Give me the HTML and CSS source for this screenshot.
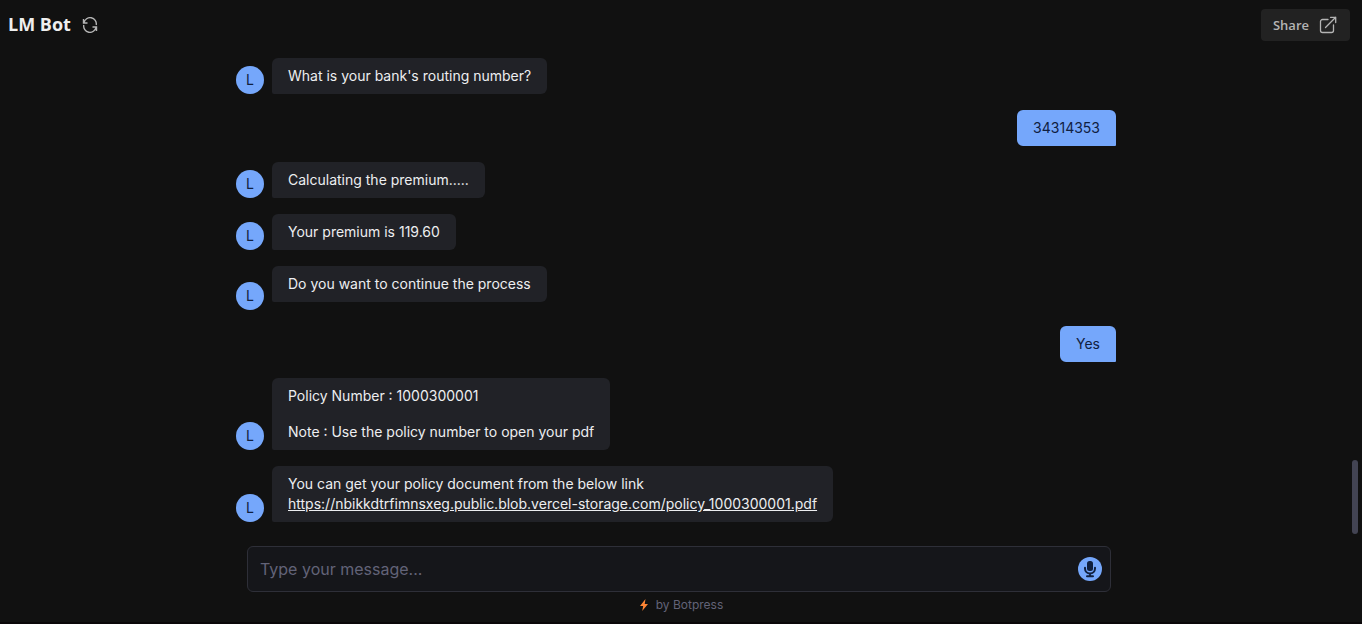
FILE: index.html
```html
<!DOCTYPE html>
<html lang="en">
<head>
<meta charset="utf-8">
<title>LM Bot</title>
<link rel="stylesheet" href="styles.css">
</head>
<body>
<header class="topbar">
  <h1 class="title">LM Bot</h1>
  <button class="restart" type="button" aria-label="Restart conversation">
    <svg viewBox="0 0 16 16" width="16" height="16" fill="none" stroke="currentColor" stroke-width="1.400"><path d="M1.500 2v4h4M2 5.700A6.200 6.200 0 0 1 14.200 8M14.500 14v-4h-4M14 10.300A6.200 6.200 0 0 1 1.800 8"/></svg>
  </button>
  <button class="share" type="button">Share
    <svg viewBox="0 0 18 18" width="18" height="18" fill="none" stroke="currentColor" stroke-width="1.300" stroke-linecap="round" stroke-linejoin="round"><path d="M9 3.500H3.500a2 2 0 0 0-2 2v9a2 2 0 0 0 2 2h9a2 2 0 0 0 2-2V9M6.500 11.500 16.700 1.300M11.500 1.300h5.200v5.200"/></svg>
  </button>
</header>
<main class="chat">
  <div class="messages">
    <div class="row"><span class="avatar">L</span><p class="bubble">What is your bank's routing number?</p></div>
    <div class="row user"><p class="bubble">34314353</p></div>
    <div class="row"><span class="avatar">L</span><p class="bubble">Calculating the premium.....</p></div>
    <div class="row"><span class="avatar">L</span><p class="bubble">Your premium is 119.60</p></div>
    <div class="row choice"><span class="avatar">L</span><p class="bubble">Do you want to continue the process</p></div>
    <div class="row user"><p class="bubble">Yes</p></div>
    <div class="row"><span class="avatar">L</span><div class="bubble paragraphs"><p>Policy Number : 1000300001</p><p>Note : Use the policy number to open your pdf</p></div></div>
    <div class="row"><span class="avatar">L</span><p class="bubble">You can get your policy document from the below link<br><a href="#">https://nbikkdtrfimnsxeg.public.blob.vercel-storage.com/policy_1000300001.pdf</a></p></div>
  </div>
  <span class="thumb"></span>
</main>
<div class="dock">
  <form class="composer">
    <input class="field" type="text" placeholder="Type your message..." aria-label="Message">
    <button class="mic" type="button" aria-label="Record voice">
      <svg viewBox="0 0 24 24" width="24" height="24" fill="none" stroke="currentColor" stroke-width="2" stroke-linecap="round"><rect x="9" y="4" width="6" height="10" rx="2.500" fill="currentColor" stroke="none"/><path d="M7 10.800v.7a5 5 0 0 0 10 0v-.7M12 16.800v2.400M9 19.300h6"/></svg>
    </button>
  </form>
</div>
<footer class="credit">
  <svg viewBox="0 0 10 14" width="10" height="14" fill="#ff8534"><path d="M6.500 1 1 8H4.200L3.200 13 9 6H5.700z"/></svg>
  <span>by Botpress</span>
</footer>
</body>
</html>
```
FILE: styles.css
```css
* { box-sizing: border-box; }
body {
  margin: 0;
  min-height: 100vh;
  display: flex;
  flex-direction: column;
  background: #111111;
  color: #edeef0;
  font-family: Inter, "Liberation Sans", sans-serif;
  font-size: 14px;
  line-height: 20px;
  border-bottom: 2px solid #0a0709;
}
p { margin: 0; }
button { border: 0; padding: 0; font: inherit; cursor: pointer; }
svg { display: block; }
.topbar {
  display: flex;
  align-items: center;
  height: 50px;
  padding: 0 12px 0 8px;
  font-family: "Open Sans", "Noto Sans", sans-serif;
}
.title { margin: 0; padding-bottom: 2px; font-size: 18px; line-height: 24px; font-weight: 700; color: #eeeeee; }
.restart { margin-left: 11px; background: none; color: #b4b4b4; }
.share {
  margin-left: auto;
  height: 32px;
  padding: 0 13px 0 12px;
  display: flex;
  align-items: center;
  gap: 10px;
  border-radius: 4px;
  background: #222222;
  color: #b4b4b4;
  font-size: 13px;
  font-weight: 600;
}
.chat { position: relative; flex: 1; padding: 8px 10px 24px 0; }
.messages {
  display: flex;
  flex-direction: column;
  gap: 16px;
  width: 100%;
  max-width: 880px;
  margin: 0 auto;
}
.row { display: flex; align-items: flex-end; gap: 8px; }
.avatar {
  flex: none;
  width: 28px;
  height: 28px;
  border-radius: 50%;
  background: #75a7fb;
  color: #10203f;
  line-height: 28px;
  text-align: center;
}
.bubble {
  padding: 8px 16px;
  border-radius: 6px 6px 6px 2px;
  background: #212227;
}
.bubble a { color: inherit; }
.paragraphs { display: grid; gap: 16px; }
.choice .bubble { margin-bottom: 8px; }
.user { justify-content: flex-end; }
.user .bubble {
  border-radius: 6px 6px 1px 6px;
  background: #75a7fb;
  color: #10203f;
}
.thumb {
  position: absolute;
  right: 4px;
  bottom: 12px;
  width: 6px;
  height: 74px;
  border-radius: 3px;
  background: #434453;
}
.dock { padding: 0 12px 0 8px; }
.composer {
  display: flex;
  align-items: center;
  max-width: 864px;
  height: 46px;
  margin: 0 auto;
  padding: 0 8px 0 12px;
  border: 1px solid #2e2f38;
  border-radius: 6px;
  background: #15161a;
}
.field {
  flex: 1;
  min-width: 0;
  border: 0;
  padding: 0;
  outline: 0;
  background: none;
  color: inherit;
  font: inherit;
  font-size: 16px;
}
.field::placeholder { color: #626378; opacity: 1; }
.mic { border-radius: 50%; background: #75a7fb; color: #10203f; }
.credit {
  display: flex;
  justify-content: center;
  align-items: center;
  gap: 7px;
  height: 26px;
  margin-bottom: 4px;
  font-size: 12px;
  color: #626378;
}
```
